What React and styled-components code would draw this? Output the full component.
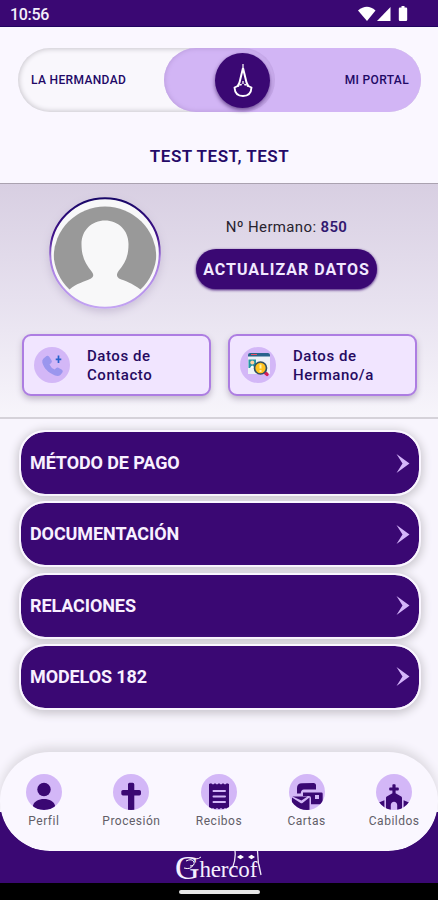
import styled, { createGlobalStyle } from "styled-components";
import { FaChurch } from "react-icons/fa";

const menuItems = ["MÉTODO DE PAGO", "DOCUMENTACIÓN", "RELACIONES", "MODELOS 182"];

const PersonIcon = () => (
  <svg width="36" height="36" viewBox="0 0 36 36" fill="#3a0873">
    <circle cx="18" cy="15.5" r="6.7" />
    <path d="M7 31.500c1-4 5.500-6.500 11-6.500s10 2.500 11 6.500v2q-11 5-22 0z" />
  </svg>
);

const CrossIcon = () => (
  <svg width="36" height="36" viewBox="0 0 36 36" fill="#3a0873">
    <path d="M16.500 8.800h3.200q1.600 0 1.600 1.600v5.600h5q1.700 0 1.700 1.600v2.200q0 1.700-1.700 1.700h-5V36h-6.300V21.500h-5q-1.700 0-1.700-1.700v-2.200q0-1.600 1.700-1.600h5v-5.600q0-1.600 1.500-1.600z" />
  </svg>
);

const ReceiptIcon = () => (
  <svg width="36" height="36" viewBox="0 0 36 36">
    <path
      d="M8 10l2-.8 2 1.300 2-1.300 2 1.300 2-1.300 2 1.300 2-1.300 2 1.300 2-1.300 2 .8V34.500l-2 .8-2-1.300-2 1.300-2-1.300-2 1.300-2-1.300-2 1.300-2-1.300-2 1.300L8 34.500z"
      fill="#3a0873"
    />
    <path d="M12.500 17h11.500M12.500 22.500h11.500M12.500 28h11.500" stroke="#d3b7f7" strokeWidth="2" strokeLinecap="round" />
  </svg>
);

const LettersIcon = () => (
  <svg width="36" height="36" viewBox="0 0 36 36" fill="#3a0873">
    <path d="M8 19.500V14q0-4.500 5-4.700l11.500-.3q2.500 0 2.500 2.500V15.500H15q-3 0-3.300 4z" />
    <path d="M14 18.500h18.500q1.200 0 1.200 1.200V29q0 1.300-1.200 1.300H22V24q0-2-2-2h-6zM26 21v4h4v-4z" fillRule="evenodd" />
    <path d="M3 23.500l8.500 5.500q1 .6 2 0l7-5.500V36H3z" />
    <path d="M3.500 22.500h15l-6 4z" />
  </svg>
);

const ChurchIcon = styled(FaChurch)`
  margin-bottom: -2.5px;
`;

const tabs = [
  { label: "Perfil", icon: <PersonIcon /> },
  { label: "Procesión", icon: <CrossIcon /> },
  { label: "Recibos", icon: <ReceiptIcon /> },
  { label: "Cartas", icon: <LettersIcon /> },
  { label: "Cabildos", icon: <ChurchIcon size={32} /> },
];

const StatusIcons = () => (
  <svg width="50" height="16" viewBox="0 0 50 16" fill="#fff">
    <path d="M0 4.500Q9-3 17.500 4.500L9 15z" />
    <path d="M32.500 1v14H19z" />
    <path d="M43.500 0h3v1.500h1.500q1.200 0 1.200 1.200v11.100q0 1.200-1.200 1.200h-6q-1.200 0-1.200-1.200V2.700q0-1.200 1.200-1.200h1.500z" />
  </svg>
);

const HoodIcon = () => (
  <svg width="24" height="36" viewBox="0 0 24 36" fill="none" stroke="#fff" strokeLinejoin="round">
    <path d="M12 2V8" strokeWidth="1.200" />
    <path d="M12 6L8.500 20.500L6.500 24.500M12 6L15.500 20.500L17.500 24.500" strokeWidth="2" />
    <path d="M8 23.500L3.500 25.500Q4 34 12 34T20.500 25.500L16 23.500" strokeWidth="1.900" />
    <path d="M8.300 23L10.800 22.500M15.700 23L13.200 22.500M12 19v3" strokeWidth="1.300" />
  </svg>
);

const Avatar = () => (
  <svg width="112" height="112" viewBox="0 0 112 112">
    <defs>
      <linearGradient id="ring" x1="0" y1="0" x2="0" y2="1">
        <stop offset="0" stopColor="#180767" />
        <stop offset="0.35" stopColor="#42128b" />
        <stop offset="0.55" stopColor="#a579df" />
        <stop offset="1" stopColor="#c3a4f2" />
      </linearGradient>
      <clipPath id="face">
        <circle cx="56" cy="61" r="51.500" />
      </clipPath>
    </defs>
    <circle cx="56" cy="56" r="54.800" fill="#f8f8f9" stroke="url(#ring)" strokeWidth="2" />
    <path d="M20.500 92.500A51.500 51.500 0 1 1 91.500 92.500C83 86 76 84 70 81.500Q66 79 69.500 74C76 66 79.500 60 79.500 47C79.500 33 69 23.500 56 23.500S32.500 33 32.500 47C32.500 60 36.500 67 43 75Q46 79 42 81.500C35 85 28 86 20.500 92.500Z" fill="#999" clipPath="url(#face)" />
  </svg>
);

const PhoneIcon = () => (
  <svg width="36" height="36" viewBox="0 0 36 36">
    <path
      d="M9.500 11.500l3-2.500q1.500-1 2.700.7l2.300 3.500q1 1.500-.4 2.700l-1.600 1.500q1.600 3.500 5.200 5.200l1.500-1.500q1.200-1.200 2.700-.2l3 1.900q1.600 1 .5 2.600l-2 2.500q-2 1.800-5.400.6C14.200 25.700 9.800 21.300 8.300 15.500q-.5-2.500 1.200-4z"
      fill="#9a96ee"
    />
    <path d="M24.500 8.500V16M21.700 12.300h5.600" stroke="#2963cc" strokeWidth="1.700" />
  </svg>
);

const MemberIcon = () => (
  <svg width="36" height="36" viewBox="0 0 36 36">
    <path d="M8 8q0-2 2-2h18q2 0 2 2v19H8z" fill="#edf2f7" />
    <path d="M8 9.500V8q0-2 2-2h18q2 0 2 2v1.500z" fill="#28638b" />
    <path d="M11 7.500h6" stroke="#ec5064" strokeWidth="1.200" />
    <path d="M8.500 12.500h7.500v8.500H8.500z" fill="#2594a5" />
    <circle cx="12.300" cy="15.500" r="2" fill="#ffd0a0" />
    <path d="M10 21q2.300-5 4.600 0z" fill="#fff" />
    <path d="M25.500 26l1.500 1.300" stroke="#d51d58" strokeWidth="3.500" strokeLinecap="round" />
    <circle cx="20.500" cy="21" r="6" fill="#ffc31f" stroke="#34505f" strokeWidth="1.700" />
    <path d="M20.500 17.500v4M20.500 23v2" stroke="#fff1a8" strokeWidth="2" />
  </svg>
);

const Arrow = () => (
  <svg width="14" height="19" viewBox="0 0 14 19">
    <path d="M.5 0L13.500 9.500.5 19 6.500 9.500z" fill="#d4b5fa" />
  </svg>
);

const App = () => {
  return (
    <Screen>
      <GlobalStyle />
      <StatusBar>
        <Clock>10:56</Clock>
        <StatusIcons />
      </StatusBar>
      <Header>
        <Switch>
          <SwitchLabel>LA HERMANDAD</SwitchLabel>
          <Portal>
            <KnobTrack>
              <Knob>
                <HoodIcon />
              </Knob>
            </KnobTrack>
            <SwitchLabel>MI PORTAL</SwitchLabel>
          </Portal>
        </Switch>
        <Name>TEST TEST, TEST</Name>
      </Header>
      <Profile>
        <Summary>
          <AvatarHolder>
            <Avatar />
          </AvatarHolder>
          <Details>
            <Member>
              Nº Hermano: <b>850</b>
            </Member>
            <UpdateButton>ACTUALIZAR DATOS</UpdateButton>
          </Details>
        </Summary>
        <Cards>
          <Card>
            <Bubble>
              <PhoneIcon />
            </Bubble>
            <CardText>
              Datos de
              <br />
              Contacto
            </CardText>
          </Card>
          <Card>
            <Bubble>
              <MemberIcon />
            </Bubble>
            <CardText>
              Datos de
              <br />
              Hermano/a
            </CardText>
          </Card>
        </Cards>
      </Profile>
      <Menu>
        {menuItems.map((item) => (
          <MenuItem key={item}>
            <MenuLabel>{item}</MenuLabel>
            <Arrow />
          </MenuItem>
        ))}
      </Menu>
      <Footer>
        <TabBar>
          {tabs.map((tab) => (
            <Tab key={tab.label}>
              <Bubble $clip>{tab.icon}</Bubble>
              <TabLabel>{tab.label}</TabLabel>
            </Tab>
          ))}
        </TabBar>
        <Brand>
          <BrandInitial>G</BrandInitial>
          <BrandName>hercof</BrandName>
          <BrandHood width="88" height="32" viewBox="0 0 88 32">
            <path d="M11 10q6-3 8 1 1 4-4 4M9 17q7 2 9-3M20 8q4 0 6-2" fill="none" stroke="#fff" strokeWidth="1" />
            <path d="M60 0q1 8-2.500 17M82.500 0q0 12 3.500 24M84 14l2 10" fill="none" stroke="#eee8f7" strokeWidth="1.300" />
            <path d="M62 6l3.500-2.300L69 6l-3.500 2.300zM73 6l3.500-2.300L80 6l-3.500 2.300z" fill="#fff" />
          </BrandHood>
        </Brand>
      </Footer>
      <SystemBar>
        <HomeIndicator />
      </SystemBar>
    </Screen>
  );
};

export default App;

const GlobalStyle = createGlobalStyle`
  * {
    box-sizing: border-box;
  }

  body {
    margin: 0;
    font-family: Roboto, sans-serif;
  }

  svg {
    display: block;
    flex-shrink: 0;
  }
`;

const Screen = styled.div`
  width: 438px;
  height: 900px;
  display: flex;
  flex-direction: column;
  overflow: hidden;
  background: #f8f5fd;
`;

const StatusBar = styled.div`
  height: 27px;
  display: flex;
  align-items: center;
  justify-content: space-between;
  padding: 1px 30px 0 10px;
  background: #3a0873;
  border-bottom: 1px solid #210461;
`;

const Clock = styled.div`
  color: #f4effb;
  font-size: 16px;
  font-weight: 500;
  letter-spacing: -0.3px;
  padding-top: 2px;
`;

const Header = styled.header`
  height: 156px;
  padding: 21px 17px 0 18px;
  background: #faf7ff;
`;

const Switch = styled.div`
  height: 64px;
  display: flex;
  align-items: center;
  justify-content: space-between;
  padding-left: 13px;
  border-radius: 32px;
  background: #f9f7fc;
  box-shadow: inset 0 0 5px 1px #c9c6cd;
`;

const SwitchLabel = styled.span`
  color: #220866;
  font-size: 12px;
  font-weight: 500;
  letter-spacing: 0.35px;
  white-space: nowrap;
`;

const Portal = styled.div`
  width: 257px;
  height: 64px;
  display: flex;
  align-items: center;
  justify-content: space-between;
  padding-right: 12px;
  border-radius: 32px;
  background: #d2b5f5;
`;

const KnobTrack = styled.div`
  width: 111px;
  height: 64px;
  display: flex;
  align-items: center;
  justify-content: flex-end;
  padding-right: 5px;
  border-radius: 32px;
  box-shadow: inset 0 0 4px 1px #bd9fdf;
`;

const Knob = styled.div`
  width: 55px;
  height: 55px;
  display: flex;
  align-items: center;
  justify-content: center;
  border-radius: 50%;
  background: #3a0873;
  box-shadow: 0 2px 4px #68468e;
`;

const Name = styled.h1`
  margin: 34px 0 0;
  color: #250a68;
  font-size: 17px;
  font-weight: 600;
  line-height: 20px;
  letter-spacing: 0.5px;
  text-align: center;
`;

const Profile = styled.section`
  height: 236px;
  padding: 13px 21px 0 22px;
  background: linear-gradient(#d8cfe2, #e7e1ef 50%, #f7f5fb);
  border-top: 1px solid #aaa2b0;
  border-bottom: 2px solid #d5d2d9;
`;

const Summary = styled.div`
  display: flex;
`;

const AvatarHolder = styled.div`
  margin-left: 27px;
  border-radius: 50%;
  box-shadow: 0 3px 8px #c8bed5;
`;

const Details = styled.div`
  width: 181px;
  margin-left: 35px;
  padding-top: 20px;
`;

const Member = styled.p`
  margin: 0;
  color: #28232f;
  font-size: 15px;
  line-height: 20px;
  letter-spacing: 0.35px;
  text-align: center;

  b {
    color: #321970;
    font-weight: 600;
  }
`;

const UpdateButton = styled.button`
  width: 181px;
  height: 40px;
  margin-top: 12px;
  padding: 0;
  border: 0;
  border-radius: 20px;
  background: #3a0873;
  color: #f1e8ff;
  font: 700 16px Roboto, sans-serif;
  letter-spacing: 1px;
  white-space: nowrap;
  box-shadow: 0 1px 3px #3a0873;
`;

const Cards = styled.div`
  display: flex;
  gap: 17px;
  margin-top: 25px;
`;

const Card = styled.div`
  flex: 1;
  height: 62px;
  display: flex;
  align-items: center;
  padding-left: 10px;
  border: 2px solid #ad7de2;
  border-radius: 9px;
  background: #f1e5ff;
  box-shadow: 0 3px 6px #bfb7c8;
`;

const Bubble = styled.div`
  width: 36px;
  height: 36px;
  flex-shrink: 0;
  display: flex;
  align-items: ${(props) => (props.$clip ? "flex-end" : "center")};
  justify-content: center;
  border-radius: 50%;
  background: #d3b7f7;
  color: #3a0873;
  overflow: hidden;
`;

const CardText = styled.div`
  margin-left: 17px;
  padding-top: 2px;
  color: #260a61;
  font-size: 15px;
  font-weight: 500;
  line-height: 19px;
  letter-spacing: 0.55px;
`;

const Menu = styled.nav`
  height: 333px;
  display: flex;
  flex-direction: column;
  gap: 5.3px;
  padding: 11px 17px 0 19px;
  background: #f8f5fd;
`;

const MenuItem = styled.div`
  height: 66px;
  display: flex;
  align-items: center;
  justify-content: space-between;
  padding: 0 9px 0 9px;
  border: 2px solid #faf6ff;
  border-radius: 26px;
  background: #3a0873;
  background-clip: padding-box;
  color: #f8f0ff;
  font-size: 18px;
  font-weight: 700;
  letter-spacing: -0.1px;
  box-shadow: 0 2px 8px 2px #cbc8cf;
`;

const MenuLabel = styled.span`
  padding-bottom: 1px;
`;

const Footer = styled.footer`
  height: 131px;
  background: linear-gradient(#f8f5fd 60px, #3a0873 60px);
`;

const TabBar = styled.div`
  height: 99px;
  display: flex;
  padding-top: 22px;
  border-radius: 50px;
  background: #faf7ff;
  box-shadow: 0 -5px 10px #dddae1;
  clip-path: inset(-20px 0 0 0 round 0 0 50px 50px);
`;

const Tab = styled.div`
  flex: 1;
  display: flex;
  flex-direction: column;
  align-items: center;
`;

const TabLabel = styled.span`
  margin-top: 3px;
  color: #625e68;
  font-size: 12px;
  line-height: 16px;
  letter-spacing: 0.5px;
`;

const Brand = styled.div`
  position: relative;
  width: 88px;
  height: 32px;
  margin-left: 175px;
  display: flex;
  align-items: flex-end;
  color: #f5efff;
  font-family: "Liberation Serif", serif;
`;

const BrandInitial = styled.span`
  font-size: 34px;
  line-height: 30px;
`;

const BrandName = styled.span`
  font-size: 23px;
  line-height: 26px;
  letter-spacing: -0.2px;
`;

// the hood hangs from the tab bar over the last letters
const BrandHood = styled.svg`
  position: absolute;
  inset: 0;
`;

const SystemBar = styled.div`
  height: 17px;
  display: flex;
  justify-content: center;
  padding-top: 7px;
  background: #000;
`;

const HomeIndicator = styled.div`
  width: 81px;
  height: 4px;
  border-radius: 2px;
  background: #e6e6e6;
`;
